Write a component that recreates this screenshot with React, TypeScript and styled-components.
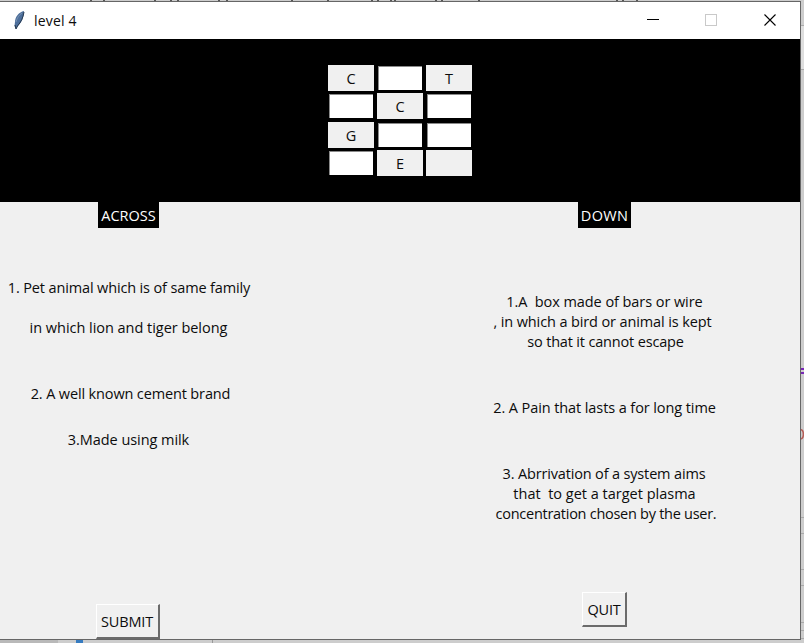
import React from 'react';
import styled, { createGlobalStyle } from 'styled-components';

const GlobalStyle = createGlobalStyle`
  * { box-sizing: border-box; }
  body { margin: 0; background: #cfcfcf; overflow: hidden; }
`;

const Desktop = styled.div`
  position: relative;
  width: 804px;
  height: 643px;
  padding-top: 1px;
  overflow: hidden;
  background: #cdcdcd;
  color: #0c0c0c;
  font: 14.5px/20px "Open Sans", "Noto Sans", sans-serif;
`;

const Backdrop = styled.svg`
  position: absolute;
  inset: 0;
`;

const Window = styled.main`
  position: relative;
  display: flex;
  flex-direction: column;
  width: 801px;
  height: 639px;
  border: solid #666;
  border-width: 1px 1px 1px 0;
  background: #f0f0f0;
`;

const TitleBar = styled.header`
  display: flex;
  align-items: center;
  flex: 0 0 37px;
  padding-left: 12px;
  background: #fff;
`;

const Title = styled.h1`
  flex: 1;
  margin: 0 0 0 8px;
  font-size: 14px;
  font-weight: 400;
  letter-spacing: 0.2px;
`;

const Board = styled.section`
  display: flex;
  justify-content: center;
  flex: 0 0 163px;
  padding-top: 26px;
  background: #000;
`;

const Grid = styled.div`
  display: grid;
  grid-template-columns: repeat(3, 46px);
  grid-template-rows: repeat(4, 26px);
  column-gap: 3px;
  row-gap: 2.4px;
  align-content: start;
`;

const Letter = styled.div`
  display: grid;
  place-items: center;
  padding-top: 2px;
  background: #f0f0f0;
`;

const Entry = styled.input`
  width: 44px;
  height: 24px;
  margin: 1px;
  padding: 0 2px;
  border: solid #8a8a8a;
  border-width: 1px 0 0 1px;
  border-radius: 0;
  outline: 0;
  background: #fff;
  font: inherit;
`;

const Clues = styled.section`
  display: flex;
  justify-content: space-between;
  flex: 1;
  min-height: 0;
`;

const Column = styled.div<{ $right?: number }>`
  display: flex;
  flex-direction: column;
  align-items: center;
  width: 257px;
  margin-right: ${(p) => p.$right ?? 0}px;
`;

const Heading = styled.h2<{ $width: number; $spacing?: number }>`
  display: flex;
  justify-content: center;
  align-items: center;
  width: ${(p) => p.$width}px;
  height: 26px;
  margin: 0;
  padding-top: 2px;
  background: #000;
  color: #fff;
  font-size: 14.5px;
  font-weight: 400;
  letter-spacing: ${(p) => p.$spacing ?? 0}px;
`;

const Clue = styled.p<{ $top?: number; $spacing?: number; $shift?: number }>`
  height: 20px;
  margin: ${(p) => p.$top ?? 0}px 0 0 ${(p) => p.$shift ?? 0}px;
  white-space: pre;
  letter-spacing: ${(p) => p.$spacing ?? 0}px;
`;

const PushButton = styled.button<{ $width: number; $top: number; $shift?: number; $spacing?: number }>`
  display: flex;
  justify-content: center;
  align-items: center;
  flex: none;
  width: ${(p) => p.$width}px;
  height: 35px;
  margin: ${(p) => p.$top}px 0 0 ${(p) => p.$shift ?? 0}px;
  padding: 2px 0 0;
  border: solid;
  border-width: 1px 2px 2px 1px;
  border-color: #fff #6b6b6b #6b6b6b #fff;
  background: #f0f0f0;
  color: inherit;
  font: inherit;
  letter-spacing: ${(p) => p.$spacing ?? 0}px;
`;

const rows = [
  ['C', null, 'T'],
  [null, 'C', null],
  ['G', null, null],
  [null, 'E', ''],
];

const topMarks = [90, 103, 154, 170, 177, 218, 226, 291, 327, 371, 377, 390, 394, 435, 441, 478, 616, 622, 636];
const sideLines = [25, 69, 517, 533, 569, 585, 622, 630, 638];

export default function App() {
  return (
    <>
      <GlobalStyle />
      <Desktop>
        <Backdrop width="804" height="643" shapeRendering="crispEdges">
          {topMarks.map((x) => <rect key={x} x={x} y="0" width="2" height="1" fill="#555" />)}
          {sideLines.map((y) => <rect key={y} x="801" y={y} width="3" height="1" fill="#aaa" />)}
          <rect x="801" y="26" width="3" height="43" fill="#dedede" />
          <rect x="801" y="368" width="3" height="2" fill="#7826b5" />
          <rect x="801" y="372" width="3" height="2" fill="#7826b5" />
          <path d="M800 429.500C804.500 429.500 804.500 439 800 439" fill="none" stroke="#b65c56" strokeWidth="1.500" shapeRendering="auto" />
          <rect x="0" y="640" width="58" height="3" fill="#b9b9b9" />
          <rect x="76" y="640" width="7" height="3" fill="#367bc0" />
          <rect x="212" y="640" width="1" height="3" fill="#999" />
        </Backdrop>
        <Window>
          <TitleBar>
            <svg width="14" height="22" viewBox="0 0 14 22">
              <path d="M12 1C7 2 3 7 3 12L2.500 16L4 19L6 16C10 12 12 7 12 1Z" fill="#4d6f9c" />
              <path d="M12 2C11 8 9 12 5.500 16L4 19L3 15" fill="none" stroke="#26394f" strokeWidth="1" />
              <path d="M10 3C7 5 5 8 4 12" fill="none" stroke="#8299b5" strokeWidth=".8" />
            </svg>
            <Title>level 4</Title>
            <svg width="154" height="37" viewBox="646 2 154 37" fill="none" shapeRendering="crispEdges">
              <path d="M647 19.500H659" stroke="#000" />
              <rect x="705.500" y="14.500" width="11" height="11" stroke="#c9c9c9" />
              <path d="M764.500 14.500L775.500 25.500M775.500 14.500L764.500 25.500" stroke="#000" strokeWidth="1.100" shapeRendering="auto" />
            </svg>
          </TitleBar>
          <Board>
            <Grid>
              {rows.flat().map((cell, i) =>
                cell === null ? <Entry key={i} aria-label={`Cell ${i + 1}`} /> : <Letter key={i}>{cell}</Letter>,
              )}
            </Grid>
          </Board>
          <Clues>
            <Column>
              <Heading $width={61}>ACROSS</Heading>
              <Clue $top={50} $spacing={-0.14} $shift={1}>1. Pet animal which is of same family</Clue>
              <Clue $top={20} $spacing={-0.03}>in which lion and tiger belong</Clue>
              <Clue $top={46} $spacing={-0.14} $shift={4}>2. A well known cement brand</Clue>
              <Clue $top={26} $spacing={-0.06}>3.Made using milk</Clue>
              <PushButton $width={64} $top={154} $shift={-2} $spacing={-0.15}>SUBMIT</PushButton>
            </Column>
            <Column $right={67}>
              <Heading $width={53} $spacing={0.3}>DOWN</Heading>
              <Clue $top={64} $spacing={-0.07}>1.A  box made of bars or wire</Clue>
              <Clue $spacing={-0.12} $shift={-4}>, in which a bird or animal is kept</Clue>
              <Clue $spacing={-0.17} $shift={2}>so that it cannot escape</Clue>
              <Clue $top={46} $spacing={-0.09}>2. A Pain that lasts a for long time</Clue>
              <Clue $top={46} $spacing={-0.16} $shift={-1}>3. Abrrivation of a system aims</Clue>
              <Clue>that  to get a target plasma</Clue>
              <Clue $spacing={-0.27} $shift={3}>concentration chosen by the user.</Clue>
              <PushButton $width={45} $top={68} $spacing={-0.2}>QUIT</PushButton>
            </Column>
          </Clues>
        </Window>
      </Desktop>
    </>
  );
}
